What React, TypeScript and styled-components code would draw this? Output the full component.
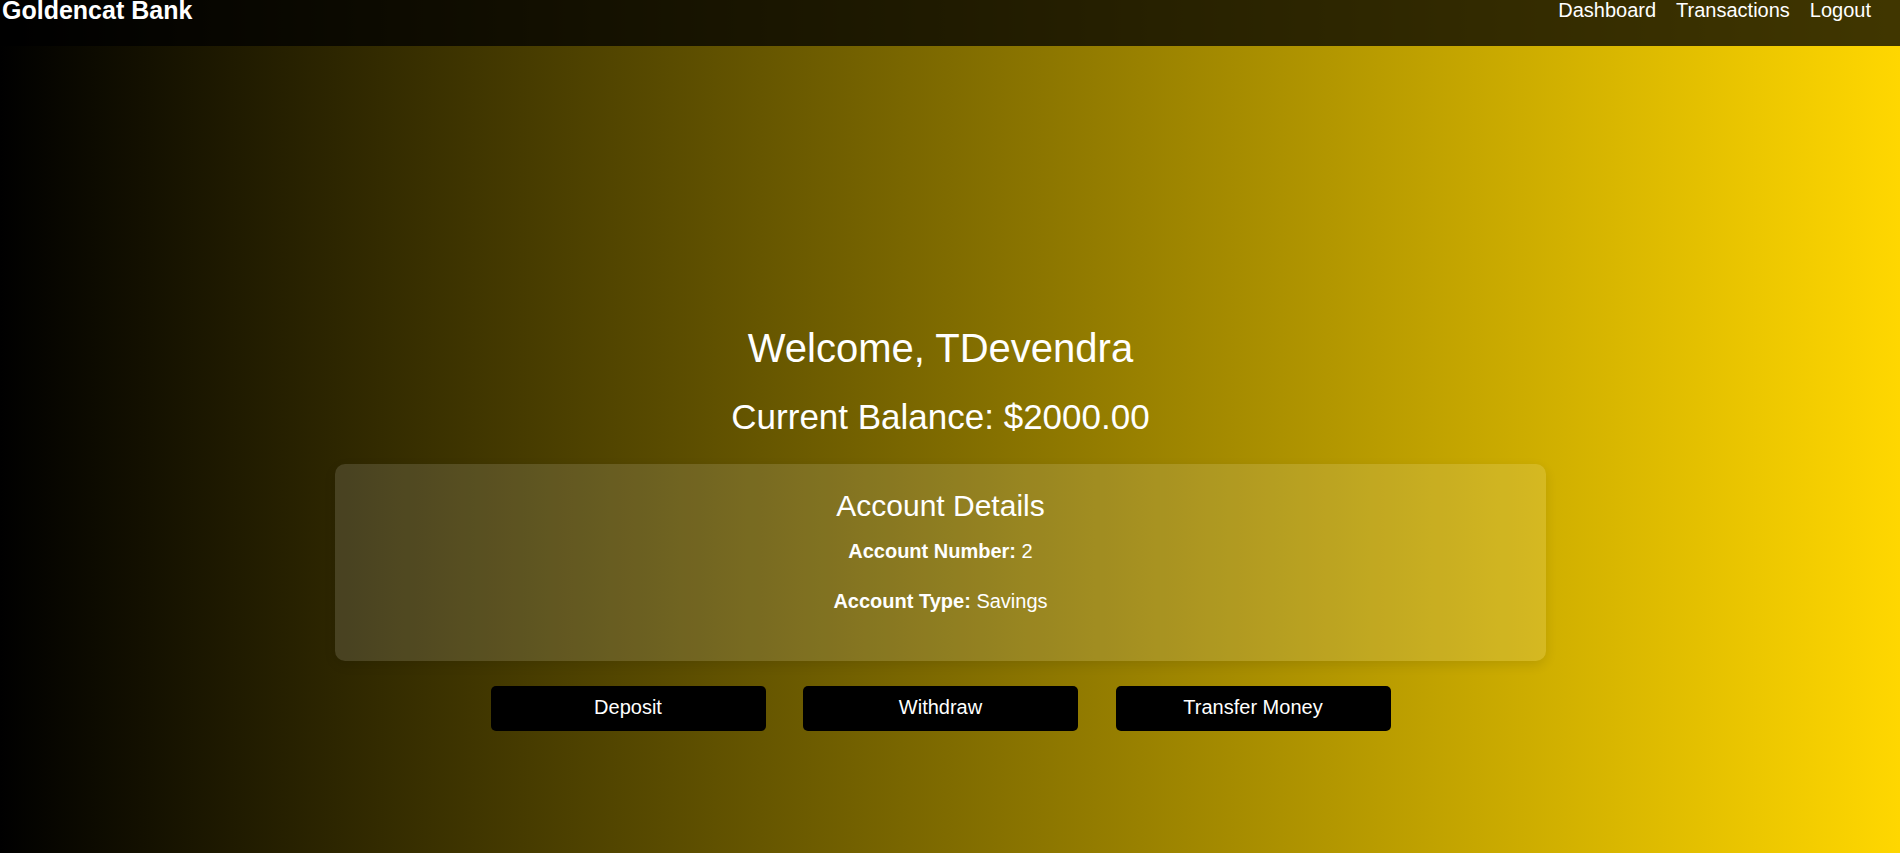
import React from 'react';
import styled, { createGlobalStyle } from 'styled-components';

const GlobalStyle = createGlobalStyle`
  html, body {
    margin: 0;
    padding: 0;
    height: 100%;
  }
  body {
    font-family: "Liberation Sans", Arial, sans-serif;
    color: #fff;
  }
`;

const actions = ['Deposit', 'Withdraw', 'Transfer Money'];

export default function App() {
  return (
    <Page>
      <GlobalStyle />
      <Header>
        <Brand>Goldencat Bank</Brand>
        <Nav>
          <NavLink href="#">Dashboard</NavLink>
          <NavLink href="#">Transactions</NavLink>
          <NavLink href="#">Logout</NavLink>
        </Nav>
      </Header>
      <Main>
        <Welcome>Welcome, TDevendra</Welcome>
        <Balance>Current Balance: $2000.00</Balance>
        <Card>
          <CardTitle>Account Details</CardTitle>
          <Detail $gap={17}>
            <strong>Account Number:</strong> 2
          </Detail>
          <Detail $gap={28}>
            <strong>Account Type:</strong> Savings
          </Detail>
        </Card>
        <Actions>
          {actions.map((label) => (
            <ActionButton key={label}>{label}</ActionButton>
          ))}
        </Actions>
      </Main>
    </Page>
  );
}

const Page = styled.div`
  min-height: 100vh;
  background: linear-gradient(to right, #000000, #ffd700);
  display: flex;
  flex-direction: column;
`;

const Header = styled.header`
  height: 46px;
  background-color: rgba(0, 0, 0, 0.75);
  display: flex;
  justify-content: space-between;
  align-items: flex-start;
  padding: 0 29px 0 2px;
  flex-shrink: 0;
`;

const Brand = styled.h1`
  margin: 0;
  font-size: 25px;
  font-weight: bold;
  line-height: 20px;
`;

const Nav = styled.nav`
  display: flex;
  gap: 20px;
`;

const NavLink = styled.a`
  color: #fff;
  text-decoration: none;
  font-size: 20px;
  line-height: 21px;
`;

const Main = styled.main`
  display: flex;
  flex-direction: column;
  align-items: center;
  padding: 279px 19px 0 0;
`;

const Welcome = styled.h2`
  margin: 0;
  font-size: 40px;
  font-weight: normal;
  line-height: 46px;
`;

const Balance = styled.h3`
  margin: 26px 0 0;
  font-size: 35px;
  font-weight: normal;
  line-height: 40px;
`;

const Card = styled.section`
  width: 1211px;
  box-sizing: border-box;
  margin-top: 27px;
  padding: 25px 20px 49px;
  border-radius: 10px;
  background-color: rgba(255, 255, 255, 0.13);
  box-shadow: 0 4px 12px rgba(0, 0, 0, 0.1);
  display: flex;
  flex-direction: column;
  align-items: center;
`;

const CardTitle = styled.h4`
  margin: 0;
  font-size: 30px;
  font-weight: normal;
  line-height: 34px;
`;

const Detail = styled.p<{ $gap: number }>`
  margin: ${(p) => p.$gap}px 0 0;
  font-size: 20px;
  line-height: 22px;

  strong {
    font-weight: bold;
  }
`;

const Actions = styled.div`
  display: flex;
  gap: 37.5px;
  margin-top: 25px;
`;

const ActionButton = styled.button`
  width: 275px;
  height: 45px;
  padding: 0 0 2px;
  border: none;
  border-radius: 5px;
  background-color: #000;
  color: #fff;
  font-family: "Liberation Sans", Arial, sans-serif;
  font-size: 20px;
  line-height: 23px;
  cursor: pointer;
`;
